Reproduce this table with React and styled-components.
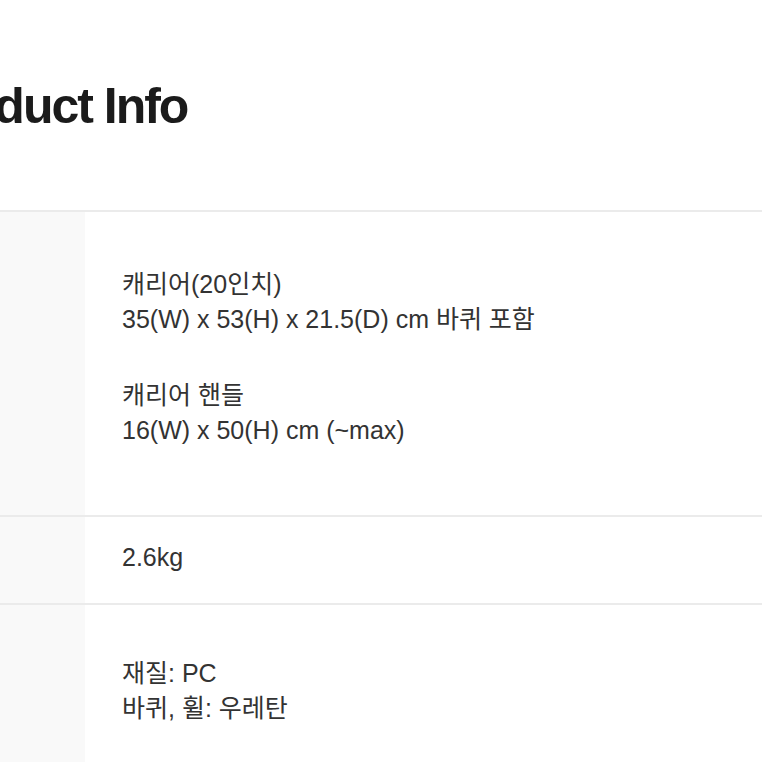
import styled, {createGlobalStyle} from 'styled-components'

const GlobalStyle = createGlobalStyle`
    html, body {
        margin: 0;
        padding: 0;
        background: #ffffff;
    }
    body {
        font-family: "Liberation Sans", "Noto Sans CJK KR", sans-serif;
        color: #333333;
        overflow: hidden;
    }
`

const Page = styled.div`
    width: 845px;
    margin-left: -83px;
`

const Title = styled.h2`
    margin: 0;
    padding-top: 78px;
    height: 210px;
    box-sizing: border-box;
    font-size: 50px;
    line-height: 57px;
    font-weight: 700;
    letter-spacing: -2px;
    color: #1b1b1b;
`

const Table = styled.div`
    border-top: 2px solid #ebebeb;
`

const Row = styled.div`
    display: grid;
    grid-template-columns: 168px 1fr;
    border-bottom: 2px solid #ebebeb;
`

const Label = styled.div`
    background: #f9f9f9;
`

const Value = styled.div`
    padding: ${props => props.$top}px 30px ${props => props.$bottom}px 37px;
    font-size: 25px;
    line-height: 35px;
    color: #333333;
`

const Para = styled.p`
    margin: 0;
    & + & {
        margin-top: 41px;
    }
`

const rows = [
    {id: 1, top: 55, bottom: 67, paras: [
        ['캐리어(20인치)', '35(W) x 53(H) x 21.5(D) cm 바퀴 포함'],
        ['캐리어 핸들', '16(W) x 50(H) cm (~max)']
    ]},
    {id: 2, top: 23, bottom: 28, paras: [['2.6kg']]},
    {id: 3, top: 51, bottom: 60, paras: [['재질: PC', '바퀴, 휠: 우레탄']]}
]

function App() {
    return (
        <>
            <GlobalStyle />
            <Page>
                <Title>Product Info</Title>
                <Table>
                    {rows.map(row => (
                        <Row key={row.id}>
                            <Label />
                            <Value $top={row.top} $bottom={row.bottom}>
                                {row.paras.map((lines, i) => (
                                    <Para key={i}>
                                        {lines.map((line, j) => <span key={j}>{line}{j < lines.length - 1 ? <br /> : null}</span>)}
                                    </Para>
                                ))}
                            </Value>
                        </Row>
                    ))}
                </Table>
            </Page>
        </>
    )
}

export default App
